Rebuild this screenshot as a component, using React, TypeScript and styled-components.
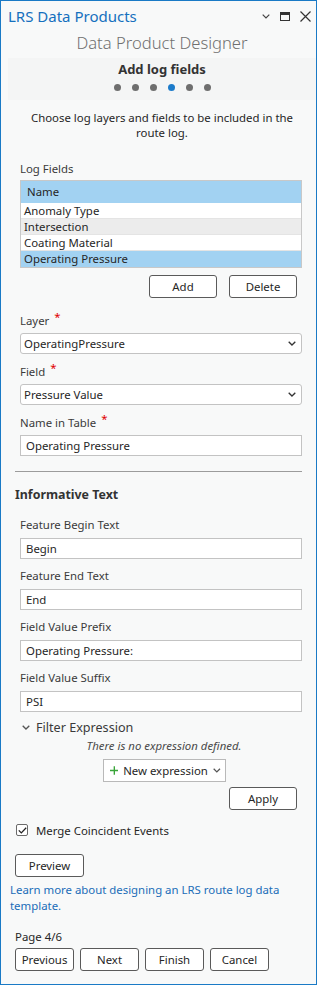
import React from 'react';
import styled, { createGlobalStyle } from 'styled-components';

const Global = createGlobalStyle`
  html, body { margin: 0; padding: 0; background: #f8f9f9; }
  body { font-family: "Noto Sans", "Open Sans", sans-serif; }
  * { box-sizing: border-box; }
`;

const Pane = styled.div`
  width: 317px;
  height: 985px;
  border: 1px solid #1a7ac6;
  background: #f8f9f9;
  display: flex;
  flex-direction: column;
  color: #262626;
  font-size: 11.4px;
  overflow: hidden;
`;

const TitleBar = styled.div`
  height: 30px;
  display: flex;
  align-items: center;
  padding: 0 5px 0 7px;
`;

const Title = styled.div`
  flex: 1;
  font-size: 15px;
  color: #1570be;
`;

const WinButtons = styled.div`
  display: flex;
  align-items: center;
  gap: 10px;
`;

const Header = styled.div`
  padding-left: 7px;
  display: flex;
  flex-direction: column;
`;

const Subtitle = styled.div`
  height: 24px;
  line-height: 24px;
  text-align: center;
  font-size: 16.6px;
  font-weight: 300;
  color: #707070;
`;

const StepBand = styled.div`
  margin-top: 3px;
  height: 42px;
  background: #f4f5f5;
  display: flex;
  flex-direction: column;
  align-items: center;
`;

const StepTitle = styled.div`
  height: 22px;
  line-height: 22px;
  font-size: 13px;
  font-weight: 700;
  color: #333;
`;

const Dots = styled.div`
  display: flex;
  gap: 11px;
  margin-top: 4px;
`;

const Dot = styled.span<{ $active?: boolean }>`
  width: 7px;
  height: 7px;
  border-radius: 50%;
  background: ${(p) => (p.$active ? '#1c7bca' : '#6e6e6e')};
`;

const Description = styled.div`
  margin-top: 10px;
  padding: 0 22px;
  text-align: center;
  line-height: 15px;
  color: #262626;
`;

const Body = styled.div`
  padding: 0 14px;
  display: flex;
  flex-direction: column;
`;

const Group = styled.div<{ $mt: number }>`
  margin-top: ${(p) => p.$mt}px;
  padding-left: 5px;
  display: flex;
  flex-direction: column;
`;

const Label = styled.div`
  height: 16px;
  line-height: 16px;
  color: #3b3b3b;
  white-space: nowrap;
`;

const Req = styled.span`
  color: #e00000;
  margin-left: 5px;
  position: relative;
  top: -4px;
`;

const Table = styled.div`
  margin-top: 3px;
  border: 1px solid #c8c8c8;
  background: #fff;
  display: flex;
  flex-direction: column;
`;

const THead = styled.div`
  height: 22px;
  line-height: 22px;
  background: #a2d2f2;
  padding-left: 6px;
  color: #262626;
`;

const TRow = styled.div<{ $bg: string }>`
  height: 16px;
  line-height: 15px;
  padding-left: 3px;
  background: ${(p) => p.$bg};
  border-bottom: 1px solid #e4e4e4;
  &:last-child { border-bottom: none; }
`;

const ButtonRow = styled.div<{ $mt: number; $justify?: string; $gap?: number; $pr?: number }>`
  margin-top: ${(p) => p.$mt}px;
  padding-right: ${(p) => p.$pr ?? 0}px;
  display: flex;
  justify-content: ${(p) => p.$justify || 'flex-start'};
  gap: ${(p) => p.$gap ?? 6}px;
`;

const Btn = styled.button<{ $w: number }>`
  width: ${(p) => p.$w}px;
  height: 23px;
  border: 1px solid #5a5a5a;
  border-radius: 3px;
  background: #fff;
  font-family: inherit;
  font-size: 11.4px;
  color: #262626;
  padding: 0;
`;

const Select = styled.div`
  margin-top: 4px;
  height: 21px;
  border: 1px solid #c3c3c3;
  border-radius: 3px;
  background: #fff;
  display: flex;
  align-items: center;
  padding: 0 5px 0 3px;
  color: #262626;
  span { flex: 1; }
`;

const TextInput = styled.div<{ $mt?: number }>`
  margin-top: ${(p) => p.$mt ?? 4}px;
  height: 21px;
  border: 1px solid #c3c3c3;
  background: #fff;
  display: flex;
  align-items: center;
  padding: 0 5px;
  color: #262626;
`;

const Separator = styled.div`
  margin-top: 15px;
  height: 1px;
  background: #9c9c9c;
`;

const SectionTitle = styled.div`
  margin-top: 14px;
  height: 17px;
  line-height: 17px;
  font-size: 12.4px;
  font-weight: 700;
  color: #333;
`;

const Expander = styled.div`
  margin-top: 6px;
  padding-left: 7px;
  height: 19px;
  display: flex;
  align-items: center;
  gap: 6px;
  font-size: 12.6px;
  color: #3a3a3a;
`;

const Note = styled.div`
  margin-top: 1px;
  height: 15px;
  line-height: 15px;
  text-align: center;
  font-style: italic;
  color: #4a4a4a;
  padding-left: 11px;
`;

const ExprRow = styled.div`
  margin-top: 6px;
  display: flex;
  justify-content: center;
  padding-left: 11px;
`;

const ExprButton = styled.div`
  width: 123px;
  height: 23px;
  border: 1px solid #b9b9b9;
  background: #fff;
  display: flex;
  align-items: center;
  padding: 0 4px 0 6px;
  gap: 5px;
  color: #262626;
  white-space: nowrap;
  span { flex: 1; }
`;

const CheckRow = styled.div`
  margin-top: 12px;
  padding-left: 1px;
  display: flex;
  align-items: center;
  gap: 8px;
  height: 16px;
  color: #262626;
`;

const Box = styled.div`
  width: 12px;
  height: 12px;
  border: 1px solid #6a6a6a;
  border-radius: 2px;
  background: #fff;
  display: flex;
  align-items: center;
  justify-content: center;
`;

const Link = styled.div`
  margin: 5px 0 0 -5px;
  line-height: 16px;
  color: #1a6db8;
`;

const PageLabel = styled.div`
  margin-top: 15px;
  height: 16px;
  line-height: 16px;
  color: #262626;
`;

const Chevron = ({ color = '#333' }: { color?: string }) => (
  <svg width="8" height="5" viewBox="0 0 8 5">
    <path d="M0.7 0.7 L4 4 L7.3 0.7" stroke={color} strokeWidth="1.3" fill="none" />
  </svg>
);

export default function App() {
  return (
    <>
      <Global />
      <Pane>
        <TitleBar>
          <Title>LRS Data Products</Title>
          <WinButtons>
            <svg width="8" height="5" viewBox="0 0 8 5">
              <path d="M0.7 0.7 L4 4 L7.3 0.7" stroke="#444" strokeWidth="1.2" fill="none" />
            </svg>
            <svg width="10" height="9" viewBox="0 0 10 9">
              <rect x="0.5" y="0.5" width="9" height="8" stroke="#333" fill="none" />
              <rect x="0.5" y="0.5" width="9" height="2.5" fill="#333" />
            </svg>
            <svg width="11" height="11" viewBox="0 0 11 11">
              <path d="M0.5 0.5 L10.5 10.5 M10.5 0.5 L0.5 10.5" stroke="#333" strokeWidth="1.2" />
            </svg>
          </WinButtons>
        </TitleBar>
        <Header>
          <Subtitle>Data Product Designer</Subtitle>
          <StepBand>
            <StepTitle>Add log fields</StepTitle>
            <Dots>
              {[0, 1, 2, 3, 4, 5].map((i) => (
                <Dot key={i} $active={i === 3} />
              ))}
            </Dots>
          </StepBand>
          <Description>Choose log layers and fields to be included in the route log.</Description>
        </Header>
        <Body>
          <Group $mt={21}>
            <Label>Log Fields</Label>
            <Table>
              <THead>Name</THead>
              <TRow $bg="#fff">Anomaly Type</TRow>
              <TRow $bg="#ececec">Intersection</TRow>
              <TRow $bg="#fff">Coating Material</TRow>
              <TRow $bg="#a2d2f2">Operating Pressure</TRow>
            </Table>
            <ButtonRow $mt={7} $justify="flex-end" $gap={12} $pr={5}>
              <Btn $w={68}>Add</Btn>
              <Btn $w={68}>Delete</Btn>
            </ButtonRow>
          </Group>
          <Group $mt={15}>
            <Label>Layer<Req>*</Req></Label>
            <Select><span>OperatingPressure</span><Chevron /></Select>
          </Group>
          <Group $mt={10}>
            <Label>Field<Req>*</Req></Label>
            <Select><span>Pressure Value</span><Chevron /></Select>
          </Group>
          <Group $mt={10}>
            <Label>Name in Table<Req>*</Req></Label>
            <TextInput>Operating Pressure</TextInput>
          </Group>
          <Separator />
          <SectionTitle>Informative Text</SectionTitle>
          <Group $mt={14}>
            <Label>Feature Begin Text</Label>
            <TextInput $mt={5}>Begin</TextInput>
          </Group>
          <Group $mt={9}>
            <Label>Feature End Text</Label>
            <TextInput $mt={5}>End</TextInput>
          </Group>
          <Group $mt={9}>
            <Label>Field Value Prefix</Label>
            <TextInput $mt={5}>Operating Pressure:</TextInput>
          </Group>
          <Group $mt={9}>
            <Label>Field Value Suffix</Label>
            <TextInput $mt={5}>PSI</TextInput>
          </Group>
          <Expander>
            <Chevron color="#555" />
            <span>Filter Expression</span>
          </Expander>
          <Note>There is no expression defined.</Note>
          <ExprRow>
            <ExprButton>
              <svg width="9" height="9" viewBox="0 0 9 9">
                <path d="M4.5 0 V9 M0 4.5 H9" stroke="#3aa53a" strokeWidth="1.4" />
              </svg>
              <span>New expression</span>
              <Chevron color="#555" />
            </ExprButton>
          </ExprRow>
          <ButtonRow $mt={5} $justify="flex-end" $pr={5}>
            <Btn $w={68}>Apply</Btn>
          </ButtonRow>
          <CheckRow>
            <Box>
              <svg width="9" height="7" viewBox="0 0 9 7">
                <path d="M0.8 3.4 L3.3 5.9 L8.2 0.8" stroke="#222" strokeWidth="1.3" fill="none" />
              </svg>
            </Box>
            <span>Merge Coincident Events</span>
          </CheckRow>
          <ButtonRow $mt={16}>
            <Btn $w={69}>Preview</Btn>
          </ButtonRow>
          <Link>Learn more about designing an LRS route log data template.</Link>
          <PageLabel>Page 4/6</PageLabel>
          <ButtonRow $mt={3}>
            <Btn $w={59}>Previous</Btn>
            <Btn $w={59}>Next</Btn>
            <Btn $w={59}>Finish</Btn>
            <Btn $w={59}>Cancel</Btn>
          </ButtonRow>
        </Body>
      </Pane>
    </>
  );
}
